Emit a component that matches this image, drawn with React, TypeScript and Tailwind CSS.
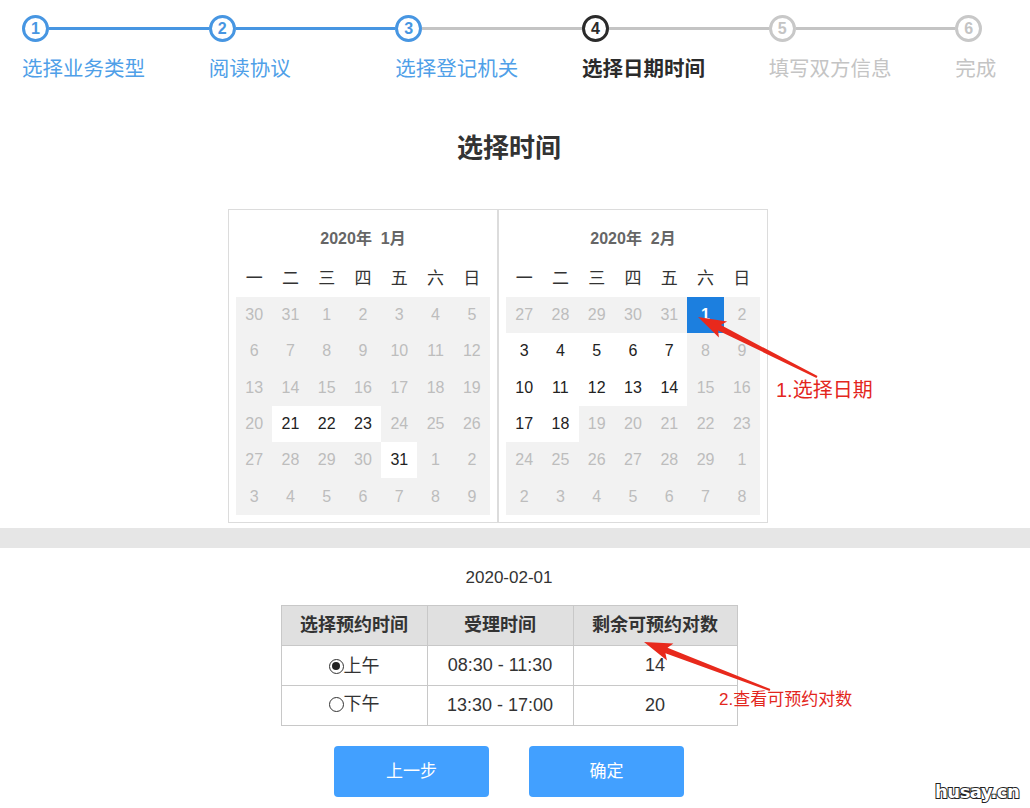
import React from 'react';

const FONT = "font-['Liberation_Sans','Noto_Sans_CJK_SC',sans-serif]";

type Step = { n: number; label: string; state: 'done' | 'current' | 'todo' };

const steps: Step[] = [
    { n: 1, label: '选择业务类型', state: 'done' },
    { n: 2, label: '阅读协议', state: 'done' },
    { n: 3, label: '选择登记机关', state: 'done' },
    { n: 4, label: '选择日期时间', state: 'current' },
    { n: 5, label: '填写双方信息', state: 'todo' },
    { n: 6, label: '完成', state: 'todo' },
];

type Cell = { d: number; on?: boolean; sel?: boolean };

const range = (a: number, b: number, on = false): Cell[] =>
    Array.from({ length: b - a + 1 }, (_, i) => ({ d: a + i, on }));

const janDays: Cell[] = [
    ...range(30, 31), ...range(1, 5),
    ...range(6, 12),
    ...range(13, 19),
    { d: 20 }, ...range(21, 23, true), ...range(24, 26),
    ...range(27, 30), { d: 31, on: true }, ...range(1, 2),
    ...range(3, 9),
];

const febDays: Cell[] = [
    ...range(27, 31), { d: 1, sel: true }, { d: 2 },
    ...range(3, 7, true), ...range(8, 9),
    ...range(10, 14, true), ...range(15, 16),
    ...range(17, 18, true), ...range(19, 23),
    ...range(24, 29), { d: 1 },
    ...range(2, 8),
];

const weekdays = ['一', '二', '三', '四', '五', '六', '日'];

function MonthPanel({ title, days }: { title: string; days: Cell[] }) {
    return (
        <div className="w-[270px] border border-[#dcdcdc] px-[7px] pb-[7px]">
            <div className="h-[48px] pt-[9px] flex items-center justify-center text-[16px] font-bold text-[#666] whitespace-pre">
                {title}
            </div>
            <div className="grid grid-cols-7 h-[39px] pt-[3px] items-center text-[17px] text-[#333]">
                {weekdays.map((w) => (
                    <div key={w} className="text-center">{w}</div>
                ))}
            </div>
            <div className="grid grid-cols-7 bg-[#f2f2f2]">
                {days.map((c, i) => (
                    <div
                        key={i}
                        className={
                            'h-[36.3px] flex items-center justify-center text-[16px] ' +
                            (c.sel
                                ? 'bg-[#1c7fdf] text-white font-bold'
                                : c.on
                                    ? 'bg-white text-[#222]'
                                    : 'text-[#bdbdbd]')
                        }
                    >
                        {c.d}
                    </div>
                ))}
            </div>
        </div>
    );
}

// tapered annotation arrow, tail -> tip
const arrowPoints = (tx: number, ty: number, px: number, py: number) => {
    const len = Math.hypot(px - tx, py - ty);
    const dx = (px - tx) / len;
    const dy = (py - ty) / len;
    const nx = -dy;
    const ny = dx;
    const headLen = 24;
    const bx = px - dx * headLen;
    const by = py - dy * headLen;
    const wx = px - dx * (headLen + 4);
    const wy = py - dy * (headLen + 4);
    const pts = [
        [tx + nx * 1, ty + ny * 1],
        [bx + nx * 3, by + ny * 3],
        [wx + nx * 9, wy + ny * 9],
        [px, py],
        [wx - nx * 9, wy - ny * 9],
        [bx - nx * 3, by - ny * 3],
        [tx - nx * 1, ty - ny * 1],
    ];
    return pts.map((p) => p.map((v) => v.toFixed(1)).join(',')).join(' ');
};

export default function App() {
    return (
        <div className={`relative w-[1030px] h-[808px] overflow-hidden bg-white ${FONT}`}>
            {/* step bar */}
            <div className="flex pt-[15px] pl-[22px]">
                {steps.map((s, i) => {
                    const circle =
                        s.state === 'done'
                            ? 'border-[#4796e2] text-[#4796e2]'
                            : s.state === 'current'
                                ? 'border-[#2b2b2b] text-[#2b2b2b]'
                                : 'border-[#c8c8c8] text-[#c4c4c4]';
                    const label =
                        s.state === 'done'
                            ? 'text-[#4fa0e8]'
                            : s.state === 'current'
                                ? 'text-[#2b2b2b] font-bold'
                                : 'text-[#c4c4c4]';
                    const lineBlue = i < 2;
                    return (
                        <div key={s.n} className={i < steps.length - 1 ? 'w-[186.67px]' : 'w-[60px]'}>
                            <div className="flex items-center">
                                <div
                                    className={`w-[27px] h-[27px] shrink-0 rounded-full border-[3px] bg-white flex items-center justify-center text-[16px] font-bold leading-none ${circle}`}
                                >
                                    {s.n}
                                </div>
                                {i < steps.length - 1 && (
                                    <div className={`flex-1 h-[3px] ${lineBlue ? 'bg-[#4796e2]' : 'bg-[#c4c4c4]'}`} />
                                )}
                            </div>
                            <div className={`mt-[15px] text-[20.5px] leading-[24px] whitespace-nowrap ${label}`}>
                                {s.label}
                            </div>
                        </div>
                    );
                })}
            </div>

            <div className="w-[1018px] flex flex-col items-center">
                <div className="mt-[49px] text-[26px] leading-[36px] font-bold text-[#333]">选择时间</div>

                <div className="mt-[43px] mr-[22px] flex">
                    <MonthPanel title="2020年  1月" days={janDays} />
                    <MonthPanel title="2020年  2月" days={febDays} />
                </div>
            </div>

            <div className="mt-[5px] h-[20px] bg-[#e6e6e6]" />

            <div className="w-[1018px] flex flex-col items-center">
                <div className="mt-[18px] text-[17px] leading-[24px] text-[#333]">2020-02-01</div>

                <table className="mt-[15px] border-collapse text-[18px] text-[#333]">
                    <thead>
                        <tr className="bg-[#e0e0e0]">
                            <th className="w-[146px] h-[40px] border border-[#c8c8c8] font-bold">选择预约时间</th>
                            <th className="w-[146px] h-[40px] border border-[#c8c8c8] font-bold">受理时间</th>
                            <th className="w-[164px] h-[40px] border border-[#c8c8c8] font-bold">剩余可预约对数</th>
                        </tr>
                    </thead>
                    <tbody>
                        <tr>
                            <td className="h-[40px] border border-[#c8c8c8] text-center">
                                <span className="inline-flex items-center">
                                    <span className="w-[15px] h-[15px] rounded-full border border-[#333] flex items-center justify-center">
                                        <span className="w-[8px] h-[8px] rounded-full bg-[#222]" />
                                    </span>
                                    上午
                                </span>
                            </td>
                            <td className="h-[40px] border border-[#c8c8c8] text-center">08:30 - 11:30</td>
                            <td className="h-[40px] border border-[#c8c8c8] text-center">14</td>
                        </tr>
                        <tr>
                            <td className="h-[40px] border border-[#c8c8c8] text-center">
                                <span className="inline-flex items-center">
                                    <span className="w-[15px] h-[15px] rounded-full border border-[#333]" />
                                    下午
                                </span>
                            </td>
                            <td className="h-[40px] border border-[#c8c8c8] text-center">13:30 - 17:00</td>
                            <td className="h-[40px] border border-[#c8c8c8] text-center">20</td>
                        </tr>
                    </tbody>
                </table>

                <div className="mt-[20px] flex gap-[40px]">
                    <button className="w-[155px] h-[51px] rounded-[4px] bg-[#42a0ff] text-white text-[17px]">上一步</button>
                    <button className="w-[155px] h-[51px] rounded-[4px] bg-[#42a0ff] text-white text-[17px]">确定</button>
                </div>
            </div>

            {/* annotations */}
            <svg className="absolute left-0 top-0 pointer-events-none" width="1030" height="808">
                <polygon points={arrowPoints(817, 377, 698, 317)} fill="#e8291c" />
                <polygon points={arrowPoints(770, 690, 644, 642)} fill="#e8291c" />
            </svg>
            <div className="absolute left-[776px] top-[378px] text-[20px] leading-[24px] text-[#e3261d]">1.选择日期</div>
            <div className="absolute left-[719px] top-[688px] text-[17px] leading-[24px] text-[#e3261d]">2.查看可预约对数</div>

            <div className="absolute left-[935px] top-[781px] text-[18px] leading-[22px] font-bold text-white [-webkit-text-stroke:2px_#222] [paint-order:stroke_fill] font-['DejaVu_Sans','Liberation_Sans',sans-serif] tracking-[-0.5px]">
                husay.cn
            </div>
        </div>
    );
}
